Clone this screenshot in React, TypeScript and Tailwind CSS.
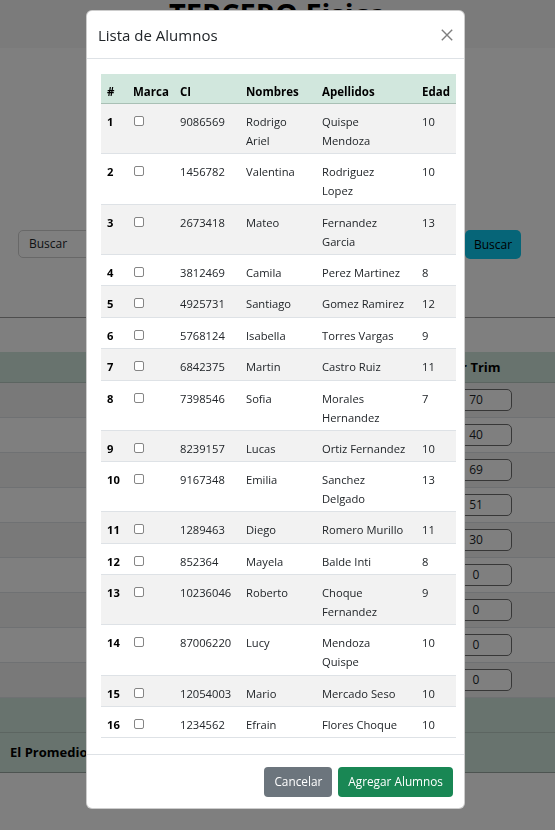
import React from "react";

type Alumno = {
  n: number;
  ci: string;
  nombres: string[];
  apellidos: string[];
  edad: number;
  h: string;
};

const alumnos: Alumno[] = [
  { n: 1, ci: "9086569", nombres: ["Rodrigo", "Ariel"], apellidos: ["Quispe", "Mendoza"], edad: 10, h: "h-[50px]" },
  { n: 2, ci: "1456782", nombres: ["Valentina"], apellidos: ["Rodriguez", "Lopez"], edad: 10, h: "h-[51px]" },
  { n: 3, ci: "2673418", nombres: ["Mateo"], apellidos: ["Fernandez", "Garcia"], edad: 13, h: "h-[50px]" },
  { n: 4, ci: "3812469", nombres: ["Camila"], apellidos: ["Perez Martinez"], edad: 8, h: "h-[31px]" },
  { n: 5, ci: "4925731", nombres: ["Santiago"], apellidos: ["Gomez Ramirez"], edad: 12, h: "h-[32px]" },
  { n: 6, ci: "5768124", nombres: ["Isabella"], apellidos: ["Torres Vargas"], edad: 9, h: "h-[31px]" },
  { n: 7, ci: "6842375", nombres: ["Martin"], apellidos: ["Castro Ruiz"], edad: 11, h: "h-[32px]" },
  { n: 8, ci: "7398546", nombres: ["Sofia"], apellidos: ["Morales", "Hernandez"], edad: 7, h: "h-[50px]" },
  { n: 9, ci: "8239157", nombres: ["Lucas"], apellidos: ["Ortiz Fernandez"], edad: 10, h: "h-[31px]" },
  { n: 10, ci: "9167348", nombres: ["Emilia"], apellidos: ["Sanchez", "Delgado"], edad: 13, h: "h-[50px]" },
  { n: 11, ci: "1289463", nombres: ["Diego"], apellidos: ["Romero Murillo"], edad: 11, h: "h-[32px]" },
  { n: 12, ci: "852364", nombres: ["Mayela"], apellidos: ["Balde Inti"], edad: 8, h: "h-[31px]" },
  { n: 13, ci: "10236046", nombres: ["Roberto"], apellidos: ["Choque", "Fernandez"], edad: 9, h: "h-[50px]" },
  { n: 14, ci: "87006220", nombres: ["Lucy"], apellidos: ["Mendoza", "Quispe"], edad: 10, h: "h-[51px]" },
  { n: 15, ci: "12054003", nombres: ["Mario"], apellidos: ["Mercado Seso"], edad: 10, h: "h-[31px]" },
  { n: 16, ci: "1234562", nombres: ["Efrain"], apellidos: ["Flores Choque"], edad: 10, h: "h-[31px]" },
];

const notas = ["70", "40", "69", "51", "30", "0", "0", "0", "0"];

const cols = "grid grid-cols-[26px_47px_66px_76px_100px_40px]";

function Lines({ items }: { items: string[] }) {
  return (
    <div className="whitespace-nowrap px-[6px] pt-[7.5px]">
      {items.map((t, i) => (
        <div key={i}>{t}</div>
      ))}
    </div>
  );
}

export default function App() {
  return (
    <div className="relative min-h-[830px] bg-white font-['Open_Sans','Segoe_UI',sans-serif] text-[#212529]">
      {/* pagina de fondo */}
      <div className="flex h-[48px] justify-center bg-[#f6f6f6]">
        <h1 className="mt-[-4px] text-[29px] font-bold leading-[36px] text-black">TERCERO Fisica</h1>
      </div>

      <div className="mt-[182px] flex gap-[10px] pl-[18px] pr-[34px]">
        <div className="flex h-[28px] flex-1 items-center rounded-[5px] border border-[#d0d0d0] pl-[10px] text-[12px]">
          Buscar
        </div>
        <div className="flex h-[29px] w-[56px] items-center justify-center rounded-[5px] bg-[#0dcaf0] text-[12px] text-black">
          Buscar
        </div>
      </div>

      <div className="mt-[58px] h-px bg-[#9c9c9c]" />

      <div className="mt-[34px]">
        <div className="grid h-[31px] grid-cols-[1fr_90px_43px] border-b border-[#b9cbc3] bg-[#d1e7dd] text-[13px] font-bold text-black">
          <div />
          <div className="pl-[24px] pt-[6px]">1er Trim</div>
          <div />
        </div>
        {notas.map((v, i) => (
          <div
            key={i}
            className={`grid h-[35px] grid-cols-[1fr_90px_43px] items-center border-b border-[#dee2e6] ${i % 2 === 0 ? "bg-[#f2f2f2]" : "bg-white"}`}
          >
            <div />
            <div className="ml-[18px] flex h-[22px] w-[72px] items-center justify-center rounded-[5px] border border-[#6f6f6f] bg-white text-[12px]">
              {v}
            </div>
            <div />
          </div>
        ))}
        <div className="h-[35px] border-b border-[#b9cbc3] bg-[#d1e7dd]" />
        <div className="flex h-[40px] items-center border-b border-[#9aa8a2] bg-[#d1e7dd] pl-[10px] text-[13px] font-bold text-black">
          El Promedio del Curso
        </div>
      </div>

      {/* fondo del modal */}
      <div className="fixed inset-0 bg-black/50" />

      {/* modal */}
      <div className="fixed left-[86px] top-[10px] flex w-[379px] flex-col rounded-[6px] border border-black/20 bg-white">
        <div className="flex h-[48px] items-center justify-between border-b border-[#dee2e6] pl-[11px] pr-[11px]">
          <div className="text-[15px] leading-[20px] text-[#212529]">Lista de Alumnos</div>
          <svg width="12" height="12" viewBox="0 0 12 12" className="opacity-50">
            <path d="M0.8 0.8 L11.2 11.2 M11.2 0.8 L0.8 11.2" stroke="#000" strokeWidth="1.4" />
          </svg>
        </div>

        <div className="pb-[16px] pl-[14px] pt-[15px]">
          <div className="w-[355px] text-[11.2px] leading-[19.3px]">
            <div className={`${cols} h-[30px] border-b border-[#a9c0b5] bg-[#d1e7dd] text-[11.5px] font-bold text-black`}>
              <Lines items={["#"]} />
              <Lines items={["Marca"]} />
              <Lines items={["CI"]} />
              <Lines items={["Nombres"]} />
              <Lines items={["Apellidos"]} />
              <Lines items={["Edad"]} />
            </div>
            {alumnos.map((a, i) => (
              <div
                key={a.n}
                className={`${cols} ${a.h} border-b border-[#dee2e6] ${i % 2 === 0 ? "bg-[#f2f2f2]" : "bg-white"}`}
              >
                <div className="px-[6px] pt-[7.5px] font-bold text-black">{a.n}</div>
                <div className="pl-[7px] pt-[12px]">
                  <div className="h-[10px] w-[10px] rounded-[2px] border border-[#858585] bg-white" />
                </div>
                <Lines items={[a.ci]} />
                <Lines items={a.nombres} />
                <Lines items={a.apellidos} />
                <Lines items={[String(a.edad)]} />
              </div>
            ))}
          </div>
        </div>

        <div className="flex h-[54px] items-center justify-end gap-[6px] border-t border-[#dee2e6] pr-[11px]">
          <button className="h-[30px] rounded-[4px] bg-[#6c757d] px-[10px] text-[11.8px] text-white">Cancelar</button>
          <button className="h-[30px] rounded-[4px] bg-[#198754] px-[10px] text-[11.8px] text-white">Agregar Alumnos</button>
        </div>
      </div>
    </div>
  );
}
